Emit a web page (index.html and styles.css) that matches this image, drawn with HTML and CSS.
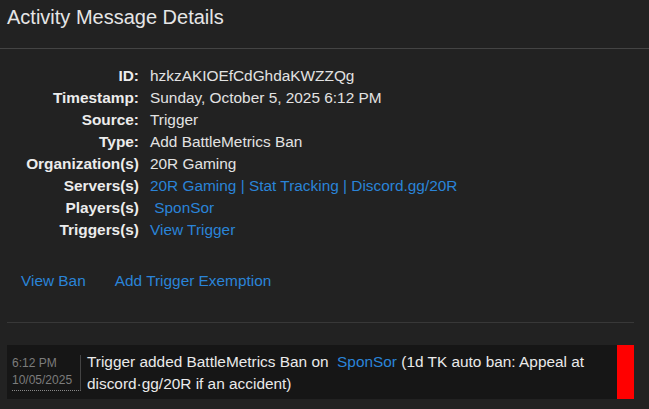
FILE: index.html
```html
<!DOCTYPE html>
<html>
<head>
<meta charset="utf-8">
<link rel="stylesheet" href="styles.css">
</head>
<body>
<div class="modal">
  <header class="head">
    <h4 class="title">Activity Message Details</h4>
  </header>
  <div class="body">
    <dl class="details">
      <dt>ID:</dt><dd>hzkzAKIOEfCdGhdaKWZZQg</dd>
      <dt>Timestamp:</dt><dd>Sunday, October 5, 2025 6:12 PM</dd>
      <dt>Source:</dt><dd>Trigger</dd>
      <dt>Type:</dt><dd>Add BattleMetrics Ban</dd>
      <dt>Organization(s)</dt><dd>20R Gaming</dd>
      <dt>Servers(s)</dt><dd><a href="#">20R Gaming | Stat Tracking | Discord.gg/20R</a></dd>
      <dt>Players(s)</dt><dd><a href="#">&nbsp;SponSor</a></dd>
      <dt>Triggers(s)</dt><dd><a href="#">View Trigger</a></dd>
    </dl>
    <div class="actions">
      <a href="#">View Ban</a>
      <a href="#">Add Trigger Exemption</a>
    </div>
    <hr class="rule">
    <div class="message">
      <div class="time">
        <span>6:12 PM</span>
        <span>10/05/2025</span>
      </div>
      <div class="text">Trigger added BattleMetrics Ban on <a href="#">&nbsp;SponSor</a> (1d TK auto ban: Appeal at discord·gg/20R if an accident)</div>
      <div class="flag"></div>
    </div>
  </div>
</div>
</body>
</html>
```
FILE: styles.css
```css
html, body {
  margin: 0;
  padding: 0;
  background: #222222;
}
body {
  font-family: "Liberation Sans", Arial, sans-serif;
  color: #e2e2e2;
  font-size: 15.4px;
  line-height: 22px;
  width: 649px;
  height: 409px;
  overflow: hidden;
}
a {
  color: #2a84d8;
  text-decoration: none;
}
.head {
  box-sizing: border-box;
  border-bottom: 1px solid #444;
  padding: 5px 7px 0;
  height: 49px;
}
.title {
  margin: 0;
  font-size: 20px;
  line-height: 24px;
  font-weight: normal;
  color: #e6e6e6;
}
.body {
  padding: 16px 15px 0 7px;
}
.details {
  display: grid;
  grid-template-columns: 132px 1fr;
  column-gap: 11px;
  margin: 0;
}
.details dt {
  text-align: right;
  font-weight: bold;
  color: #ececec;
}
.details dd {
  margin: 0;
  color: #e2e2e2;
}
.actions {
  display: flex;
  gap: 29px;
  margin-top: 29px;
  padding-left: 14px;
}
.rule {
  border: 0;
  border-top: 1px solid #383838;
  margin: 30px 0 22px;
}
.message {
  display: flex;
  background: #161616;
}
.time {
  align-self: flex-start;
  margin: 10px 0 0 5px;
  width: 68px;
  display: flex;
  flex-direction: column;
  font-size: 12px;
  line-height: 17px;
  color: #7c7c7c;
  border-right: 1px solid #444;
  border-bottom: 1px dotted #888;
  padding-bottom: 1px;
}
.text {
  flex: 1;
  padding: 6px 0 4px 6px;
  color: #eaeaea;
}
.flag {
  width: 17px;
  background: #ff0000;
}
```
